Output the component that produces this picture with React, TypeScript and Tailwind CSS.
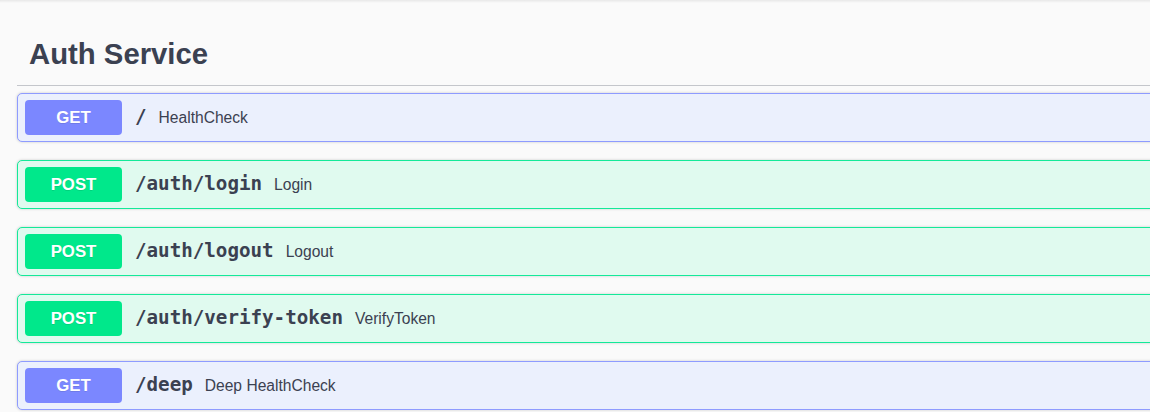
import React from 'react';

type Endpoint = {
    method: 'GET' | 'POST';
    path: string;
    summary: string;
};

const endpoints: Endpoint[] = [
    { method: 'GET', path: '/', summary: 'HealthCheck' },
    { method: 'POST', path: '/auth/login', summary: 'Login' },
    { method: 'POST', path: '/auth/logout', summary: 'Logout' },
    { method: 'POST', path: '/auth/verify-token', summary: 'VerifyToken' },
    { method: 'GET', path: '/deep', summary: 'Deep HealthCheck' },
];

const blockStyles = {
    GET: {
        block: 'bg-[#ebf0fd] border-[#8e9bff]',
        badge: 'bg-[#7b87ff]',
    },
    POST: {
        block: 'bg-[#e0faef] border-[#14e999]',
        badge: 'bg-[#00e88b]',
    },
};

const OpBlock: React.FC<{ ep: Endpoint }> = ({ ep }) => {
    const s = blockStyles[ep.method];
    return (
        <div className={`mb-[18px] h-[49px] rounded-[5px] border ${s.block} shadow-[0_0_3px_rgba(0,0,0,0.19)] flex items-center pl-[7px] pr-[6px]`}>
            <span
                className={`${s.badge} w-[97px] h-[35px] rounded-[4px] flex items-center justify-center text-white text-[16.8px] font-bold [text-shadow:0_1px_0_rgba(0,0,0,0.1)]`}
                style={{ fontFamily: '"Liberation Sans", Arial, sans-serif' }}
            >
                {ep.method}
            </span>
            <span
                className="pl-[13px] pr-[12px] text-[19.2px] font-bold text-[#3b4151]"
                style={{ fontFamily: '"DejaVu Sans Mono", monospace' }}
            >
                {ep.path}
            </span>
            <span
                className="text-[15.6px] text-[#3b4151]"
                style={{ fontFamily: '"Liberation Sans", Arial, sans-serif' }}
            >
                {ep.summary}
            </span>
        </div>
    );
};

export default function App() {
    return (
        <div className="w-[1150px] h-[412px] overflow-hidden bg-[#fafafa]">
            {/* shadow from the top bar */}
            <div className="h-[3px] bg-gradient-to-b from-[#e8e8e8] to-[#fafafa]" />
            <div className="pl-[17px] mr-[-12px] pt-[21px]">
                <h3
                    className="pt-[12px] pb-[13px] pl-[12px] leading-[36px] text-[29.3px] font-bold text-[#3b4151] border-b border-[#c4c6cb]"
                    style={{ fontFamily: '"Liberation Sans", Arial, sans-serif' }}
                >
                    Auth Service
                </h3>
                <div className="mt-[7px]">
                    {endpoints.map((ep) => (
                        <OpBlock key={ep.path} ep={ep} />
                    ))}
                </div>
            </div>
        </div>
    );
}
